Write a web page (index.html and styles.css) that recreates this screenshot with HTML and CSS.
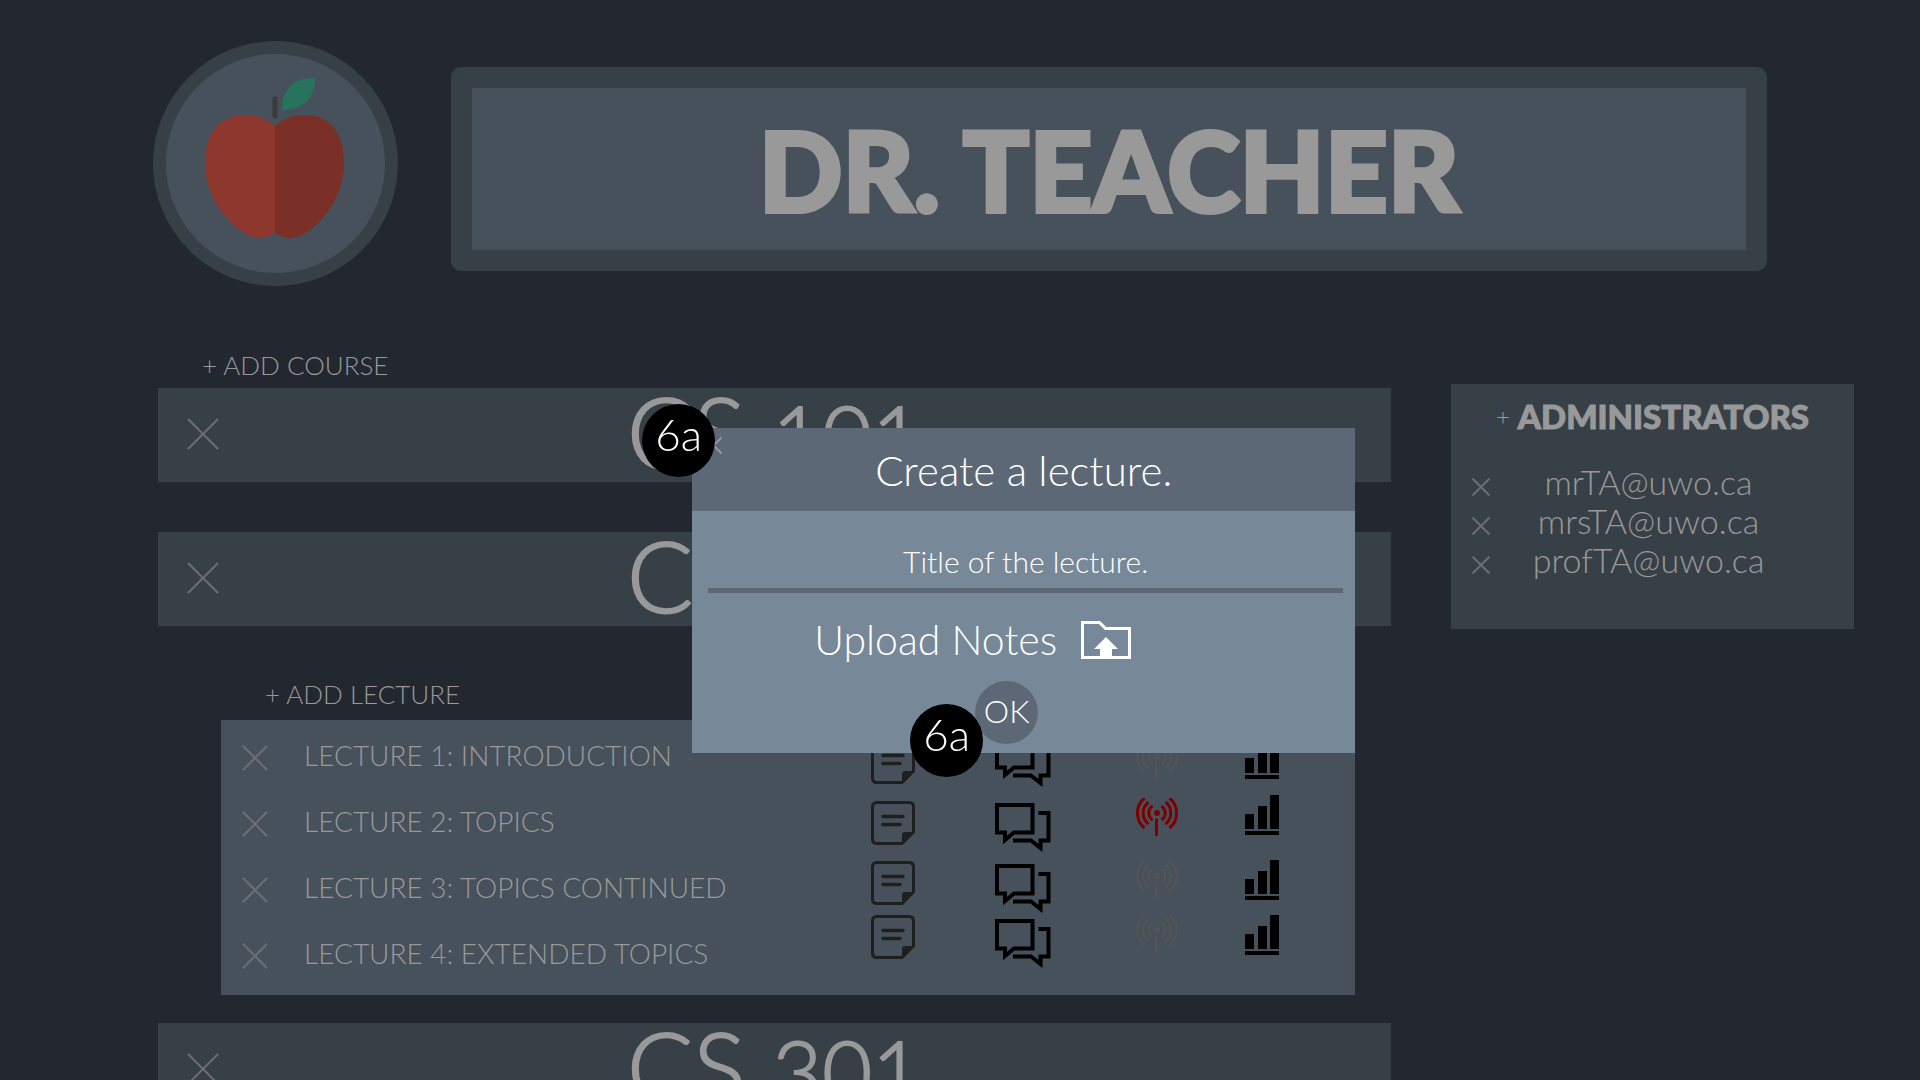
FILE: index.html
```html
<!DOCTYPE html>
<html lang="en">
<head>
<meta charset="utf-8">
<title>Dr. Teacher</title>
<link rel="stylesheet" href="styles.css">
</head>
<body>
<svg class="symbols" aria-hidden="true">
  <symbol id="cross" viewBox="0 0 32 32"><path d="M1 1L31 31M31 1L1 31" fill="none" stroke="currentColor" stroke-width="2" vector-effect="non-scaling-stroke"/></symbol>
  <symbol id="note" viewBox="0 0 44 44"><path d="M6 1.500H38Q42.500 1.500 42.500 6V31L31 42.500H6Q1.500 42.500 1.500 38V6Q1.500 1.500 6 1.500Z" fill="none" stroke="currentColor" stroke-width="3"/><path d="M31 43.500V34Q31 31 34 31H43.500Z" fill="currentColor"/><path d="M12 15.500H32M12 23.500H29" stroke="currentColor" stroke-width="3.500" stroke-linecap="round"/></symbol>
  <symbol id="chat" viewBox="0 0 56 49"><path d="M2 2H37.500V29.500H19L10 37V29.500H2ZM43.500 10H53.500V37.500H45.500V45L36 37.500H18" fill="none" stroke="currentColor" stroke-width="4"/></symbol>
  <symbol id="signal" viewBox="0 0 42 38"><circle cx="21" cy="15" r="3" fill="currentColor" stroke="none"/><path d="M20.500 20.500V38M16.500 8A8.500 8.500 0 0 0 16.500 22M12.500 4A14 14 0 0 0 12.500 26M8.500 0A19.500 19.500 0 0 0 8.500 30M25.500 8A8.500 8.500 0 0 1 25.500 22M29.500 4A14 14 0 0 1 29.500 26M33.500 0A19.500 19.500 0 0 1 33.500 30" fill="none" stroke="currentColor"/></symbol>
  <symbol id="bars" viewBox="0 0 34 40"><path d="M0 19H9V34H0ZM13 11H22V34H13ZM25 0H34V34H25ZM0 36H34V40H0Z" fill="currentColor"/></symbol>
</svg>

<div class="page">
  <header class="top">
    <div class="avatar">
      <svg viewBox="0 0 245 245" role="img" aria-label="Apple">
        <path d="M122 85C113 77 103 74 93 74C64 74 52 95 52 122C52 160 80 188 98 195C106 199 113 197 122 192Z" fill="#8e372f"/>
        <path d="M122 85C131 77 141 74 151 74C180 74 191 95 191 122C191 160 164 188 146 195C138 199 131 197 122 192Z" fill="#7b3027"/>
        <path d="M122 58V75" stroke="#3a3c3b" stroke-width="5" stroke-linecap="round"/>
        <path d="M162 37C138 37 129 50 129 69C151 69 162 57 162 37Z" fill="#28735d"/>
      </svg>
    </div>
    <div class="nameplate"><h1>DR. TEACHER</h1></div>
  </header>

  <div class="columns">
    <main>
      <button class="add">+ ADD COURSE</button>
      <section class="course">
        <button class="remove" aria-label="Remove CS 101"><svg><use href="#cross"/></svg></button>
        <h2>CS <span>101</span></h2>
      </section>
      <section class="course">
        <button class="remove" aria-label="Remove CS 201"><svg><use href="#cross"/></svg></button>
        <h2>CS <span>201</span></h2>
      </section>
      <section class="lectures">
        <button class="add">+ ADD LECTURE</button>
        <div class="panel">
          <ul>
            <li><button class="remove" aria-label="Remove lecture 1"><svg><use href="#cross"/></svg></button>LECTURE 1: INTRODUCTION</li>
            <li><button class="remove" aria-label="Remove lecture 2"><svg><use href="#cross"/></svg></button>LECTURE 2: TOPICS</li>
            <li><button class="remove" aria-label="Remove lecture 3"><svg><use href="#cross"/></svg></button>LECTURE 3: TOPICS CONTINUED</li>
            <li><button class="remove" aria-label="Remove lecture 4"><svg><use href="#cross"/></svg></button>LECTURE 4: EXTENDED TOPICS</li>
          </ul>
          <div class="tools notes">
            <button aria-label="Notes 1"><svg><use href="#note"/></svg></button>
            <button aria-label="Notes 2"><svg><use href="#note"/></svg></button>
            <button aria-label="Notes 3"><svg><use href="#note"/></svg></button>
            <button aria-label="Notes 4"><svg><use href="#note"/></svg></button>
          </div>
          <div class="tools chats">
            <button aria-label="Chat 1"><svg><use href="#chat"/></svg></button>
            <button aria-label="Chat 2"><svg><use href="#chat"/></svg></button>
            <button aria-label="Chat 3"><svg><use href="#chat"/></svg></button>
            <button aria-label="Chat 4"><svg><use href="#chat"/></svg></button>
          </div>
          <div class="tools signals">
            <button aria-label="Broadcast 1"><svg><use href="#signal"/></svg></button>
            <button class="live" aria-label="Broadcast 2, live"><svg><use href="#signal"/></svg></button>
            <button aria-label="Broadcast 3"><svg><use href="#signal"/></svg></button>
            <button aria-label="Broadcast 4"><svg><use href="#signal"/></svg></button>
          </div>
          <div class="tools stats">
            <button aria-label="Statistics 1"><svg><use href="#bars"/></svg></button>
            <button aria-label="Statistics 2"><svg><use href="#bars"/></svg></button>
            <button aria-label="Statistics 3"><svg><use href="#bars"/></svg></button>
            <button aria-label="Statistics 4"><svg><use href="#bars"/></svg></button>
          </div>
        </div>
      </section>
      <section class="course">
        <button class="remove" aria-label="Remove CS 301"><svg><use href="#cross"/></svg></button>
        <h2>CS <span>301</span></h2>
      </section>
    </main>

    <aside class="admins">
      <div class="admins-head"><button aria-label="Add administrator">+</button><h3>ADMINISTRATORS</h3></div>
      <ul>
        <li><button class="remove" aria-label="Remove mrTA"><svg><use href="#cross"/></svg></button><span>mrTA@uwo.ca</span></li>
        <li><button class="remove" aria-label="Remove mrsTA"><svg><use href="#cross"/></svg></button><span>mrsTA@uwo.ca</span></li>
        <li><button class="remove" aria-label="Remove profTA"><svg><use href="#cross"/></svg></button><span>profTA@uwo.ca</span></li>
      </ul>
    </aside>
  </div>
</div>

<div class="dialog" role="dialog" aria-labelledby="dialog-title">
  <button class="close" aria-label="Close"><svg><use href="#cross"/></svg></button>
  <h2 id="dialog-title">Create a lecture.</h2>
  <form>
    <input type="text" aria-label="Title of the lecture" value="Title of the lecture.">
    <button type="button" class="upload">Upload Notes
      <svg viewBox="0 0 50 38" aria-hidden="true"><path d="M1.500 1.500H18.500L24.500 7.500H48.500V36.500H1.500Z" fill="none" stroke="#fff" stroke-width="3"/><path d="M25 16L37 28H31V36H19V28H13Z" fill="#fff"/></svg>
    </button>
    <button type="button" class="ok">OK</button>
  </form>
  <span class="badge badge-start">6a</span>
  <span class="badge badge-end">6a</span>
</div>
</body>
</html>
```
FILE: styles.css
```css
* { box-sizing: border-box; }

body {
  margin: 0;
  height: 100vh;
  overflow: hidden;
  background: #23272f;
  color: #999;
  font-family: Lato, "Open Sans", sans-serif;
  font-weight: 300;
}

h1, h2, h3, ul { margin: 0; padding: 0; list-style: none; }
button { padding: 0; border: 0; background: none; color: inherit; font: inherit; cursor: pointer; }
button svg { display: block; width: 100%; height: 100%; }
.symbols { position: absolute; width: 0; height: 0; }

.top {
  display: flex;
  align-items: center;
  gap: 53px;
  padding: 41px 153px 0;
}
.avatar {
  flex: none;
  width: 245px;
  height: 245px;
  border: 13px solid #384047;
  border-radius: 50%;
  background: #47515b;
}
.avatar svg { display: block; margin: -13px; width: 245px; height: 245px; }
.nameplate {
  flex: 1;
  margin-bottom: -10px;
  padding: 21px;
  border-radius: 10px;
  background: #384047;
}
.nameplate h1 {
  background: #47515b;
  text-align: center;
  font-size: 110px;
  font-weight: 900;
  line-height: 162px;
  -webkit-text-stroke: 4px #999;
}

.columns {
  display: grid;
  grid-template-columns: minmax(0, 1fr) 403px;
  gap: 60px;
  align-items: start;
  padding: 63px 66px 0 158px;
}
.add {
  display: block;
  margin-left: 44px;
  font-size: 26px;
  line-height: 32px;
}
.course {
  display: grid;
  grid-template-columns: 32px 1fr 32px;
  align-items: center;
  height: 94px;
  margin: 7px 0 50px;
  padding: 0 29px 4px;
  background: #384047;
}
.course .remove { width: 32px; height: 32px; }
.course h2 {
  align-self: start;
  text-align: center;
  font-size: 98px;
  font-weight: 300;
  line-height: 86px;
  -webkit-text-stroke: 2px #999;
}
.course h2 span { font-size: 86px; }
.remove { color: #6b6e74; }

.lectures { margin: 0 36px 28px 63px; padding-top: 2px; }
.panel {
  display: flex;
  align-items: flex-start;
  min-height: 275px;
  margin-top: 10px;
  padding-right: 76px;
  background: #47515b;
}
.panel ul { flex: 1; padding-top: 2px; }
.panel li {
  display: flex;
  align-items: center;
  gap: 36px;
  height: 66px;
  padding-left: 21px;
  font-size: 28px;
}
.panel .remove { width: 26px; height: 26px; margin-top: 5px; }

.tools { display: grid; align-content: start; justify-items: start; color: #000; }
.notes { width: 44px; margin: 20px 80px 0 0; grid-template-rows: 61px 60px 54px 44px; color: #1f1f1f; }
.notes button { width: 44px; height: 44px; }
.chats { width: 56px; margin: 18px 85px 0 0; grid-template-rows: 65px 61px 55px 49px; }
.chats button { width: 56px; height: 49px; }
.signals { width: 42px; margin: 22px 67px 0 0; grid-template-rows: 56px 63px 54px 38px; color: #555557; stroke-width: 2px; }
.signals button { width: 42px; height: 38px; }
.signals .live { color: #7d0000; stroke-width: 3px; }
.stats { width: 34px; margin-top: 19px; grid-template-rows: 56px 65px 55px 40px; }
.stats button { width: 34px; height: 40px; }

.admins {
  min-height: 245px;
  margin-top: 35px;
  padding: 12px 21px 0;
  background: #384047;
}
.admins-head {
  display: flex;
  justify-content: center;
  gap: 8px;
  line-height: 40px;
}
.admins-head button { font-size: 24px; }
.admins-head h3 { font-size: 33px; font-weight: 900; -webkit-text-stroke: 1px #999; }
.admins ul { margin-top: 25px; }
.admins li {
  display: grid;
  grid-template-columns: 18px 1fr 26px;
  align-items: center;
  height: 39px;
  text-align: center;
  font-size: 34px;
}
.admins .remove { width: 18px; height: 18px; margin-top: 10px; }

.dialog {
  position: fixed;
  top: 428px;
  left: calc(36% + 1px);
  width: 663px;
  min-height: 325px;
  background: #778898;
  color: #fff;
}
.dialog h2 {
  padding-top: 2px;
  background: #5d6876;
  text-align: center;
  font-size: 42px;
  font-weight: 300;
  line-height: 81px;
}
.close { position: absolute; top: 9px; left: 13px; width: 17px; height: 17px; color: #8f9aa6; }
.dialog form { display: flex; flex-direction: column; align-items: center; padding: 22px 12px 9px 16px; }
.dialog input {
  width: 100%;
  height: 60px;
  padding: 0;
  border: 0;
  border-bottom: 5px solid #5d6876;
  background: none;
  color: inherit;
  text-align: center;
  font: inherit;
  font-size: 30px;
}
.upload { display: flex; align-items: center; gap: 24px; margin: 24px 106px 0 0; font-size: 41px; line-height: 46px; }
.upload svg { width: 50px; height: 38px; }
.ok {
  width: 63px;
  height: 63px;
  margin: 18px 38px 0 0;
  padding-bottom: 4px;
  border-radius: 50%;
  background: #5d6876;
  font-size: 32px;
}
.badge {
  position: absolute;
  width: 73px;
  height: 73px;
  border-radius: 50%;
  background: #000;
  text-align: center;
  font-size: 44px;
  line-height: 60px;
}
.badge-start { top: -24px; left: -50px; }
.badge-end { bottom: -24px; left: 218px; }
```
